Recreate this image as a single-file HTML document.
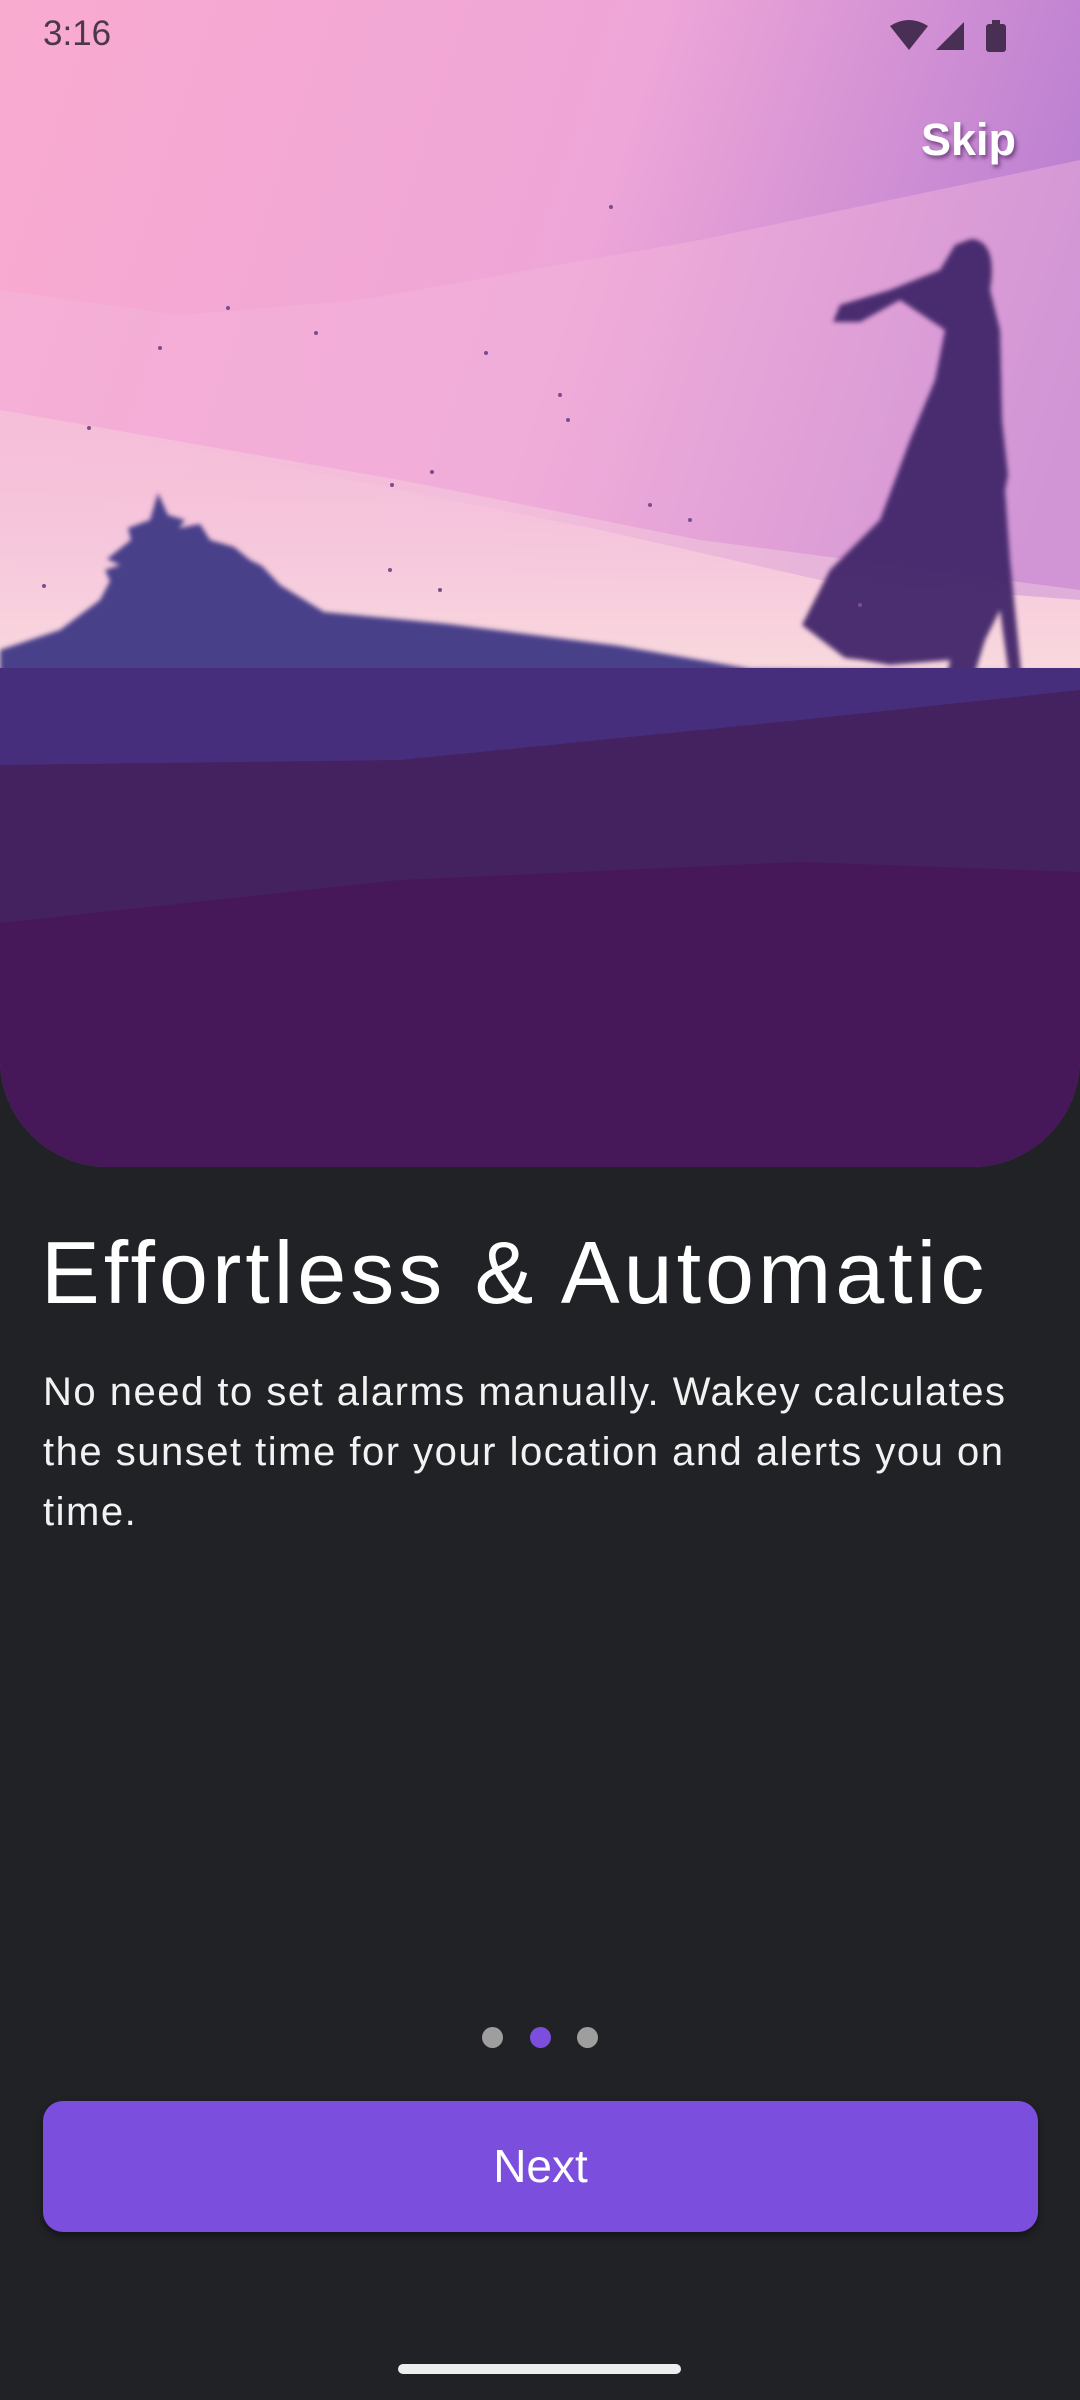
<!DOCTYPE html>
<html><head><meta charset="utf-8"><style>
*{margin:0;padding:0;box-sizing:border-box}
body{width:1080px;height:2400px;background:#212226;position:relative;overflow:hidden;font-family:"Liberation Sans",sans-serif}
.hero{position:absolute;left:0;top:0;width:1080px;height:1167px;border-radius:0 0 108px 108px;overflow:hidden}
.abs{position:absolute}
</style></head><body>
<div class="hero">
<svg width="1080" height="1167" viewBox="0 0 1080 1167">
<defs>
<linearGradient id="sky" x1="0" y1="0" x2="1" y2="0.35">
<stop offset="0" stop-color="#F9AACF"/><stop offset="0.55" stop-color="#EEA6D8"/><stop offset="1" stop-color="#B47AD0"/></linearGradient>
<linearGradient id="low" x1="0" y1="0" x2="0" y2="1">
<stop offset="0" stop-color="#F6B4D8" stop-opacity="0"/><stop offset="0.6" stop-color="#F7C6DC"/><stop offset="1" stop-color="#F9E0DC"/></linearGradient>
<filter id="b"><feGaussianBlur stdDeviation="2.5"/></filter>
</defs>
<rect width="1080" height="1167" fill="url(#sky)"/>
<path d="M0 290 L180 315 L360 300 L700 240 L1080 160 L1080 700 L0 700Z" fill="#F4B6DC" opacity="0.45"/>
<path d="M0 410 L300 470 L600 530 L820 580 L1080 600 L1080 700 L0 700Z" fill="url(#low)"/>
<path d="M0 410 L400 480 L700 540 L1080 590 L1080 700 L0 700Z" fill="#F8D6DE" opacity="0.4"/>
<path d="M0 650 L60 630 L100 600 L110 581 L105 570 L120 565 L107 559 L131 540 L128 528 L150 520 L158 493 L168 515 L185 520 L179 528 L200 524 L210 540 L234 547 L250 560 L262 566 L280 585 L324 612 L448 624 L620 646 L751 669 L1080 672 L1080 720 L0 720Z" fill="#4A3F8A" filter="url(#b)"/>
<path d="M971 239 C990 240 995 260 990 290 L1000 330 L1002 420 L1008 475 L1005 490 L1010 560 L1018 640 L1022 682 L1010 682 L1000 610 L985 640 L972 682 L946 682 L950 660 L890 665 L862 660 L845 658 L802 625 L830 570 L880 520 L910 440 L935 380 L945 330 L900 300 L860 322 L833 322 L840 305 L890 290 L940 270 L955 245Z" fill="#43276A" filter="url(#b)" opacity="0.95"/>
<rect x="0" y="668" width="1080" height="500" fill="#472E7C"/>
<path d="M0 765 L400 760 L800 720 L1080 690 L1080 1167 L0 1167Z" fill="#44215F"/>
<path d="M0 923 L400 880 L800 862 L1080 872 L1080 1167 L0 1167Z" fill="#46185A"/>
<g fill="#7A4D8E">
<circle cx="611" cy="207" r="2"/><circle cx="228" cy="308" r="2"/><circle cx="316" cy="333" r="2"/><circle cx="486" cy="353" r="2"/><circle cx="560" cy="395" r="2"/><circle cx="568" cy="420" r="2"/><circle cx="89" cy="428" r="2"/><circle cx="432" cy="472" r="2"/><circle cx="392" cy="485" r="2"/><circle cx="44" cy="586" r="2"/><circle cx="390" cy="570" r="2"/><circle cx="440" cy="590" r="2"/><circle cx="650" cy="505" r="2"/><circle cx="690" cy="520" r="2"/><circle cx="860" cy="605" r="2"/><circle cx="160" cy="348" r="2"/>
</g>
</svg>
</div>
<div class="abs" style="left:43px;top:14px;font-size:35px;color:#4a3848">3:16</div>
<svg class="abs" style="left:888px;top:18px" width="120" height="36" viewBox="0 0 120 36">
<path d="M2 8 Q21 -4 40 8 L21 32Z" fill="#4a2f55"/>
<path d="M48 32 L76 4 L76 32Z" fill="#4a2f55"/>
<rect x="98" y="6" width="20" height="28" rx="3" fill="#4a2f55"/><rect x="104" y="2" width="8" height="5" fill="#4a2f55"/>
</svg>
<div class="abs" style="left:921px;top:114px;font-size:45px;font-weight:bold;color:#fff;text-shadow:2px 3px 4px rgba(60,20,80,0.6)">Skip</div>
<div class="abs" style="left:41px;top:1222px;font-size:88px;color:#fff;white-space:nowrap;letter-spacing:4px">Effortless &amp; Automatic</div>
<div class="abs" style="left:43px;top:1362px;width:1037px;font-size:40px;line-height:60px;color:#f2f2f2;white-space:nowrap;letter-spacing:1.5px">No need to set alarms manually. Wakey calculates<br>the sunset time for your location and alerts you on<br>time.</div>
<div class="abs" style="left:482px;top:2027px;width:21px;height:21px;border-radius:50%;background:#9e9e9e"></div>
<div class="abs" style="left:530px;top:2027px;width:21px;height:21px;border-radius:50%;background:#7B4EDE"></div>
<div class="abs" style="left:577px;top:2027px;width:21px;height:21px;border-radius:50%;background:#9e9e9e"></div>
<div class="abs" style="left:43px;top:2101px;width:995px;height:131px;border-radius:20px;background:#7B4EDE;box-shadow:0 4px 8px rgba(0,0,0,0.4);color:#fff;font-size:46px;text-align:center;line-height:131px">Next</div>
<div class="abs" style="left:398px;top:2364px;width:283px;height:10px;border-radius:5px;background:#eeeeee"></div>
</body></html>
